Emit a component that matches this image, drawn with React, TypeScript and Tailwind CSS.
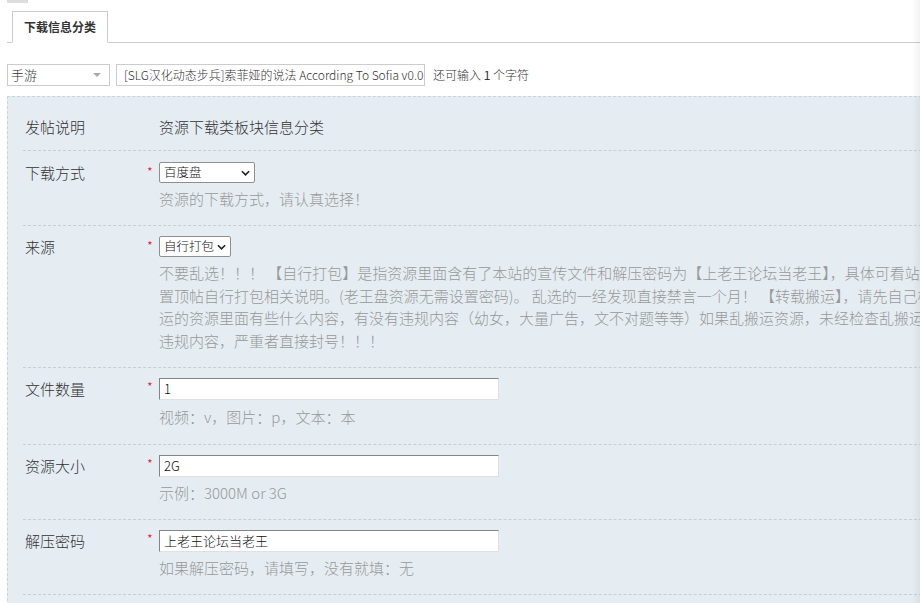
import React from "react";

function Chevron() {
  return (
    <svg viewBox="0 0 10 6" className="w-[9px] h-[6px] shrink-0" fill="none">
      <path d="M1 1l4 4 4-4" stroke="#222" strokeWidth="1.8" />
    </svg>
  );
}

function NativeSelect({ value, width }: { value: string; width: string }) {
  return (
    <div
      className={`${width} h-[21px] bg-white border border-[#8f8f8f] rounded-[2px] flex items-center justify-between pl-[4px] pr-[4px] text-[12.5px] leading-none text-[#111] whitespace-nowrap`}
    >
      <span>{value}</span>
      <Chevron />
    </div>
  );
}

function TextInput({ value }: { value: string }) {
  return (
    <div className="w-[340px] h-[22px] bg-white border border-t-[#848484] border-l-[#848484] border-r-[#e0e0e0] border-b-[#e0e0e0] flex items-center px-[4px] text-[13px] leading-none text-[#111]">
      {value}
    </div>
  );
}

function Row({
  label,
  required,
  children,
  className,
}: {
  label: string;
  required?: boolean;
  children: React.ReactNode;
  className: string;
}) {
  return (
    <div className={`flex border-b border-dashed border-[#cdcdcd] pl-[2px] ${className}`}>
      <div className="w-[122px] shrink-0 h-[22px] flex items-center text-[15px] text-[#333]">
        {label}
      </div>
      <div className="w-[12px] shrink-0 h-[18px] flex items-center text-[13px] text-[#e00] leading-none">
        {required ? "*" : ""}
      </div>
      <div className="flex-1 min-w-0">{children}</div>
    </div>
  );
}

function Hint({ children, className }: { children: React.ReactNode; className?: string }) {
  return <div className={`text-[15px] leading-[22px] text-[#999] ${className ?? ""}`}>{children}</div>;
}

export default function App() {
  const descLines = [
    "不要乱选！！！ 【自行打包】是指资源里面含有了本站的宣传文件和解压密码为【上老王论坛当老王】，具体可看站务区",
    "置顶帖自行打包相关说明。(老王盘资源无需设置密码)。 乱选的一经发现直接禁言一个月！ 【转载搬运】，请先自己检查搬",
    "运的资源里面有些什么内容，有没有违规内容（幼女，大量广告，文不对题等等）如果乱搬运资源，未经检查乱搬运的资源包含",
    "违规内容，严重者直接封号！！！",
  ];

  return (
    <div className="relative w-[920px] h-[603px] overflow-hidden bg-white text-[#333] font-light font-['Noto_Sans_CJK_SC',sans-serif]">
      <div className="ml-[7px] w-[21px] h-[3px] bg-[#dddddd]" />

      {/* Tab bar */}
      <div className="mt-[8px] ml-[7px] border-b border-[#cccccc] flex">
        <div className="ml-[5px] -mb-px h-[32px] px-[11px] border border-[#cccccc] border-b-white bg-white flex items-center text-[12px] font-bold text-[#333]">
          下载信息分类
        </div>
      </div>

      {/* Type + title */}
      <div className="mt-[21px] ml-[7px] flex items-center h-[22px]">
        <div className="w-[103px] h-[22px] border border-[#cccccc] bg-white flex items-center justify-between pl-[3px] pr-[8px] text-[13px] text-[#333]">
          <span>手游</span>
          <span className="w-0 h-0 border-l-[4px] border-r-[4px] border-t-[4px] border-l-transparent border-r-transparent border-t-[#aaa]" />
        </div>
        <div className="ml-[6px] w-[309px] h-[22px] border border-[#cccccc] bg-white pl-[7px] overflow-hidden">
          <div className="h-[20px] leading-[20px] whitespace-nowrap text-[12px] text-[#333]">
            [SLG汉化动态步兵]索菲娅的说法 According To Sofia v0.0
          </div>
        </div>
        <div className="ml-[8px] text-[12px] text-[#333] whitespace-nowrap">
          还可输入 <b>1</b> 个字符
        </div>
      </div>

      {/* Form panel */}
      <div className="mt-[10px] ml-[7px] w-[1000px] border-l border-t border-dashed border-[#c2d5e3] bg-[#e5edf2] pt-[8px] pl-[15px] h-[520px]">
        <Row label="发帖说明" className="pt-[11px] pb-[12px]">
          <div className="h-[22px] flex items-center text-[15px] text-[#333]">资源下载类板块信息分类</div>
        </Row>

        <Row label="下载方式" required className="pt-[11px] pb-[15px]">
          <NativeSelect value="百度盘" width="w-[96px]" />
          <Hint className="mt-[5px]">资源的下载方式，请认真选择！</Hint>
        </Row>

        <Row label="来源" required className="pt-[10px] pb-[14px]">
          <NativeSelect value="自行打包" width="w-[72px]" />
          <div className="mt-[5px] text-[15px] leading-[22.7px] text-[#999] whitespace-nowrap">
            {descLines.map((l) => (
              <div key={l}>{l}</div>
            ))}
          </div>
        </Row>

        <Row label="文件数量" required className="pt-[10px] pb-[16px]">
          <TextInput value="1" />
          <Hint className="mt-[6px]">视频：v，图片：p，文本：本</Hint>
        </Row>

        <Row label="资源大小" required className="pt-[10px] pb-[15px]">
          <TextInput value="2G" />
          <Hint className="mt-[5px]">示例：3000M or 3G</Hint>
        </Row>

        <Row label="解压密码" required className="pt-[10px] pb-[15px]">
          <TextInput value="上老王论坛当老王" />
          <Hint className="mt-[5px]">如果解压密码，请填写，没有就填：无</Hint>
        </Row>
      </div>

      {/* right edge shade */}
      <div className="absolute top-0 right-0 w-[8px] h-full bg-gradient-to-r from-transparent to-black/5" />
    </div>
  );
}
